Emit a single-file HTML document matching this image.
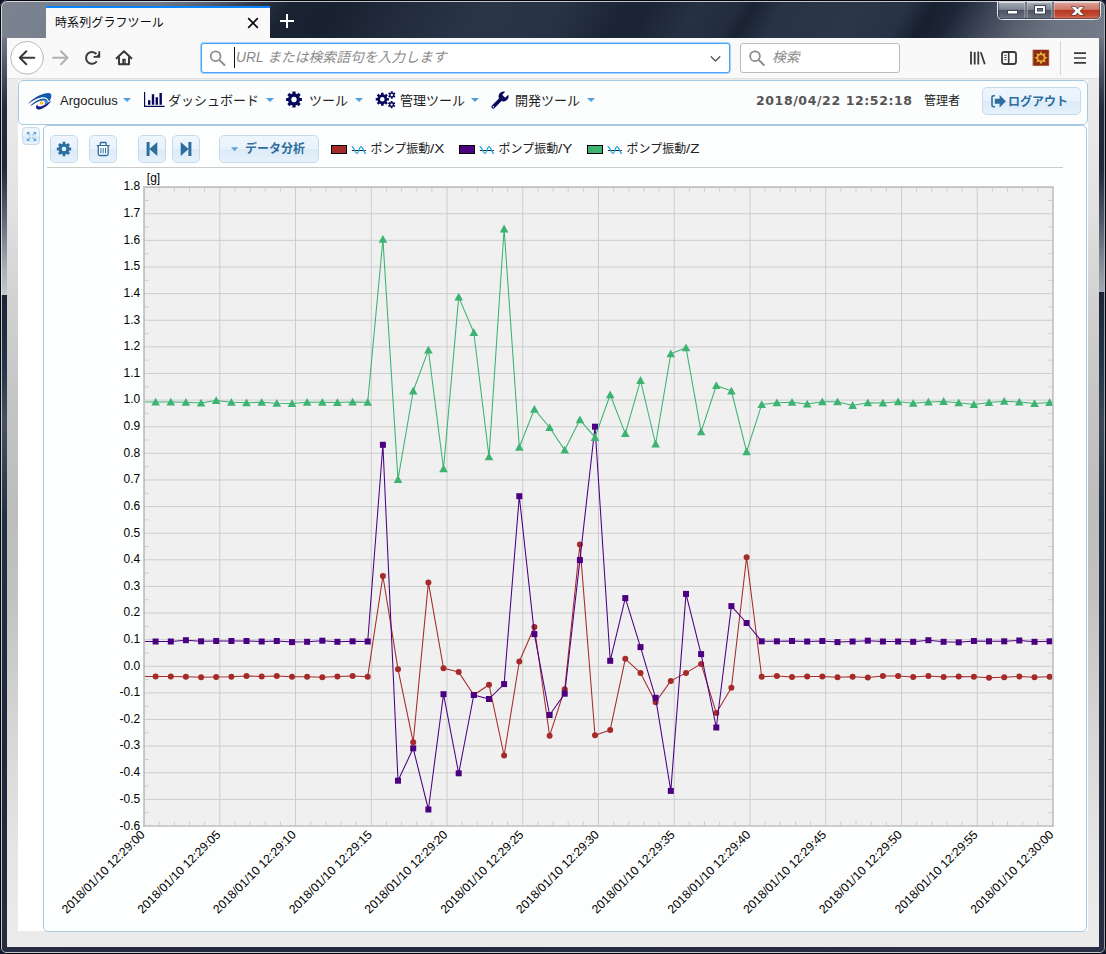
<!DOCTYPE html>
<html lang="ja">
<head>
<meta charset="utf-8">
<title>時系列グラフツール</title>
<style>
*{box-sizing:border-box;margin:0;padding:0}
html,body{width:1106px;height:954px;overflow:hidden;background:#0c1228}
body{font-family:"Liberation Sans","Noto Sans CJK JP",sans-serif;font-size:13px;color:#222;position:relative}
.abs{position:absolute}
#win{position:absolute;left:0;top:0;width:1106px;height:954px;border-radius:7px 7px 6px 6px;overflow:hidden;
 background:linear-gradient(100deg,#7b8390 0px,#6f7785 150px,#333c4e 230px,#18202f 300px,#1a2333 430px,#283245 520px,#1b2434 640px,#1a2232 760px,#2e384a 860px,#2a3446 930px,#4a5364 1000px,#6d7582 1060px,#717986 1106px);}
#titlebar{left:0;top:0;width:1106px;height:60px;border-radius:7px 7px 0 0;background:linear-gradient(120deg,#7a828f 10px,#79818e 44px,#707886 139px,#555e6e 183px,#343d4f 217px,#1a2331 252px,#18212f 295px,#222c3d 356px,#2a3547 425px,#273244 494px,#1c2535 542px,#1b2434 564px,#263143 607px,#222c3e 642px,#1a2332 655px,#283346 681px,#2b3648 746px,#273244 789px,#18202f 811px,#1d2636 832px,#3d4657 863px,#59616f 893px,#6c7481 927px,#727a87 967px)}
#frameL{left:1px;top:38px;width:6px;height:910px;background:linear-gradient(180deg,#707885 0,#4d5665 30px,#222c3d 70px,#1f293a 130px,#5d6573 180px,#a9aeb8 230px,#c4c8cf 257px,#1b2537 257.5px,#26354a 330px,#46535f 385px,#223044 480px,#1f2a3d 700px,#272b40 910px)}
#frameR{left:1099px;top:38px;width:6px;height:910px;background:linear-gradient(180deg,#6e7683 0,#4d5665 30px,#222c3d 70px,#1f293a 130px,#4d5665 180px,#8b919c 230px,#a3a8b2 254px,#1b2537 254.5px,#26354a 330px,#3c4857 385px,#223044 480px,#1f2a3d 700px,#292d43 910px)}
#frameB{left:1px;top:947px;width:1104px;height:6px;background:linear-gradient(90deg,#272b40 0,#242a3d 300px,#272c41 700px,#2b2f45 1104px)}
#frameOuter{left:0;top:0;width:1106px;height:954px;border:1px solid #05070c;border-radius:7px 7px 6px 6px}
#frameLine{left:1px;top:1px;width:1104px;height:952px;border:1px solid rgba(232,235,240,.8);border-right-color:rgba(190,195,204,.75);border-radius:6px 6px 5px 5px}
#tab{left:46px;top:6px;width:224px;height:32px;background:#f9f9fa;border-top:2px solid #0a84ff}
#tabtitle{left:55px;top:13.500px;font-size:12px;color:#0c0c0d;line-height:18px;letter-spacing:.1px}
#nav{left:7px;top:38px;width:1092px;height:41px;background:#f9f9fa;border-bottom:1px solid #e0e0e0}
#content{left:7px;top:79px;width:1092px;height:868px;background:linear-gradient(180deg,#ececec 0,#e3e3e3 120px,#d2d2d2 220px,#c4c4c4 330px,#bdbdbd 430px,#c2c2c2 520px,#d6d6d6 650px,#e6e6e6 780px,#ececec 868px)}
#white{left:18px;top:80px;width:1070px;height:851px;background:#fff}
.urlbar{background:#fff;border:1px solid #bcbcbc;border-radius:3px;height:30px;top:43px}
#url{left:201px;width:529px;border-color:#4aa3f5;box-shadow:0 0 0 1px rgba(10,132,255,.35)}
#search{left:740px;width:160px}
.ph{font-style:italic;color:#8a8a8a;font-size:13.8px;line-height:20px;white-space:nowrap}
.panel{border:1px solid #a6c9e2;border-radius:5px;background:#fcfdfd}
#menubar{left:18px;top:80px;width:1070px;height:45px}
#main{left:43px;top:125px;width:1044px;height:807px;background:#fdfefe}
.mi{top:91.700px;font-size:13px;line-height:18px;color:#222;white-space:nowrap}
.caret{width:0;height:0;border-left:4px solid transparent;border-right:4px solid transparent;border-top:4.300px solid #4f9fdc;top:98px}
.btn{border:1px solid #c5dbec;border-radius:5px;background:linear-gradient(180deg,#edf5fd 0,#eaf3fc 49%,#dcebf8 51%,#e6f1fb 100%);color:#2e6e9e}
.tb{top:135px;width:28px;height:28px}
.leg{top:141px;font-size:12px;line-height:16px;color:#222;white-space:nowrap}
.sw{top:145px;width:16px;height:9px;border:1px solid #000}
</style>
</head>
<body>
<div id="win">
<div class="abs" id="titlebar"></div>
<!-- window controls -->
<svg class="abs" style="left:997px;top:0" width="105" height="22" viewBox="0 0 105 22">
 <defs>
  <linearGradient id="gb" x1="0" y1="0" x2="0" y2="1"><stop offset="0" stop-color="#a9afb9"/><stop offset=".45" stop-color="#7d8591"/><stop offset=".5" stop-color="#4b5464"/><stop offset="1" stop-color="#69717f"/></linearGradient>
  <linearGradient id="gr" x1="0" y1="0" x2="0" y2="1"><stop offset="0" stop-color="#dca59b"/><stop offset=".45" stop-color="#cf7768"/><stop offset=".5" stop-color="#b7371f"/><stop offset=".8" stop-color="#c24a31"/><stop offset="1" stop-color="#d0705c"/></linearGradient>
 </defs>
 <path d="M.5 1V14.500q0 5 5 5H98.500q5 0 5-5V1z" fill="#20283a" stroke="#e9ecf0" stroke-width="1"/>
 <path d="M1.500 2V14.500q0 4 4 4H28.500V2z" fill="url(#gb)"/>
 <path d="M29.500 2V18.500H55.500V2z" fill="url(#gb)"/>
 <path d="M56.500 2V18.500H98.500q4 0 4-4V2z" fill="url(#gr)"/>
 <path d="M29 2V18.500M56 2V18.500" stroke="#2f3747" stroke-width="1"/><path d="M2 2.500H28V18M30 18V2.500H55V18M57 18V2.500H102" stroke="rgba(255,255,255,.55)" stroke-width="1" fill="none"/>
 <rect x="10.500" y="10.500" width="10" height="3.500" fill="#fff" stroke="#3c4454" stroke-width="1"/>
 <rect x="37.500" y="5.500" width="11" height="8.500" fill="#fff" stroke="#3c4454" stroke-width="1"/>
 <rect x="40.500" y="8.500" width="5" height="2.500" fill="#6a7280" stroke="#3c4454" stroke-width="1"/>
 <text transform="translate(80.500 14.500) scale(1.22 .92)" text-anchor="middle" font-family="'DejaVu Sans','Liberation Sans',sans-serif" font-weight="bold" font-size="16" fill="#fff" stroke="#4a3436" stroke-width="1.100" paint-order="stroke">x</text>
</svg>
<div class="abs" id="frameL"></div><div class="abs" id="frameR"></div><div class="abs" id="frameB"></div>
<div class="abs" id="tab"></div>
<div class="abs" id="tabtitle">時系列グラフツール</div>
<svg class="abs" style="left:245px;top:15px" width="16" height="16" viewBox="0 0 16 16"><path d="M3.200 3.200L12.800 12.800M12.800 3.200L3.200 12.800" stroke="#0c0c0d" stroke-width="1.700" fill="none"/></svg>
<svg class="abs" style="left:278px;top:12px" width="18" height="18" viewBox="0 0 18 18"><path d="M9 2V16M2 9H16" stroke="#fff" stroke-width="2" fill="none"/></svg>
<div class="abs" id="nav"></div>
<div class="abs urlbar" id="url"></div>
<div class="abs urlbar" id="search"></div>
<svg class="abs" style="left:7px;top:38px" width="1092" height="40" viewBox="7 38 1092 40" fill="none" stroke-linecap="round" stroke-linejoin="round">
<circle cx="27" cy="57.8" r="16.3" fill="#fff" stroke="#b9b9b9" stroke-width="1"/>
<path d="M34.3 57.8H20.3M26.3 51.3L19.800 57.8L26.300 64.3" stroke="#3a3a3c" stroke-width="2"/>
<path d="M53 57.8H67M61 51.3L67.500 57.8L61 64.3" stroke="#b1b1b3" stroke-width="2"/>
<path d="M96.400 54A5.900 5.900 0 1 0 96.800 61.200" stroke="#3a3a3c" stroke-width="2" stroke-linecap="butt"/>
<path d="M99.300 51.300V56.800H93.600" stroke="#3a3a3c" stroke-width="1.800" stroke-linecap="butt" stroke-linejoin="miter"/><path d="M99 53.500V56.500H96Z" fill="#3a3a3c" stroke="none"/>
<path d="M116.600 58.300L124 51.200L131.400 58.300M119 57.500V64.200H129V57.500" stroke="#3a3a3c" stroke-width="2"/>
<path d="M122.300 64.500V58.800H125.700V64.500Z" fill="#3a3a3c" stroke="none"/><circle cx="124.500" cy="61.800" r=".55" fill="#e8e8e8" stroke="none"/>
<circle cx="215.600" cy="56.2" r="4.900" stroke="#8d8d8f" stroke-width="1.800"/><path d="M219.300 59.9L224.400 65" stroke="#8d8d8f" stroke-width="2"/>
<path d="M711.200 56.800L715.500 61.100L719.800 56.800" stroke="#555557" stroke-width="1.350"/>
<circle cx="755" cy="56.2" r="4.900" stroke="#8d8d8f" stroke-width="1.800"/><path d="M758.700 59.9L763.800 65" stroke="#8d8d8f" stroke-width="2"/>
<path d="M971 51.5V64.500M974.700 52V64.500M978.300 51.5V64.500M980.800 52.3L984.800 64.3" stroke="#3a3a3c" stroke-width="1.800" stroke-linecap="butt"/>
<rect x="1002" y="52" width="14" height="12" rx="2.200" stroke="#3a3a3c" stroke-width="1.800"/><path d="M1008.700 52V64" stroke="#3a3a3c" stroke-width="1.600"/><path d="M1004.300 55.3H1006.500M1004.300 57.5H1006.500M1004.300 59.7H1006.500" stroke="#3a3a3c" stroke-width="1" stroke-linecap="butt"/>
<rect x="1033.200" y="50" width="15.600" height="15.600" fill="#8a2a10" stroke="#a8452c" stroke-width=".6"/>
<path d="M1041.00 51.20L1042.57 54.01L1045.67 53.13L1044.79 56.23L1047.60 57.80L1044.79 59.37L1045.67 62.47L1042.57 61.59L1041.00 64.40L1039.43 61.59L1036.33 62.47L1037.21 59.37L1034.40 57.80L1037.21 56.23L1036.33 53.13L1039.43 54.01Z" fill="#e6b03a" stroke="none"/>
<circle cx="1041" cy="57.8" r="2.700" fill="#9a3512" stroke="none"/>
<path d="M1060.500 41V75" stroke="#d4d4d4" stroke-width="1" stroke-linecap="butt"/>
<path d="M1074 53.2H1086M1074 58H1086M1074 62.800H1086" stroke="#3a3a3c" stroke-width="1.700" stroke-linecap="butt"/>
</svg>
<div class="abs ph" style="left:236px;top:47.600px">URL または検索語句を入力します</div>
<div class="abs" style="left:234px;top:47px;width:1px;height:21px;background:#111"></div>
<div class="abs ph" style="left:772px;top:47.600px">検索</div>
<div class="abs" id="content"></div>
<div class="abs" id="white"></div>
<div class="abs panel" id="menubar"></div>
<div class="abs panel" id="main"></div>
<div class="abs btn" style="left:982px;top:87px;width:99px;height:28px"></div>
<svg class="abs" style="left:18px;top:80px" width="1070" height="45" viewBox="18 80 1070 45">
<defs><linearGradient id="lg1" x1="0" y1="1" x2="1" y2="0"><stop offset="0" stop-color="#1c1c84"/><stop offset=".5" stop-color="#164fa8"/><stop offset="1" stop-color="#0f63b4"/></linearGradient><radialGradient id="lg2"><stop offset="0" stop-color="#ffe000"/><stop offset="1" stop-color="#ff9a10"/></radialGradient></defs>
<g transform="translate(28 93)"><path d="M0 11.200C5 5 13.500 .2 20.500 .1C24.300 .3 24.300 4.200 21 8.600C20.300 5.300 17.500 3.900 14 4.300C9 5 4 8 0 11.200Z" fill="url(#lg1)"/><path d="M2 13.300C6 8.300 12 5.500 16 5.500C18.200 5.600 19.400 6.800 19.800 8.600C17.500 7.200 14 7 11 8.200C8 9.400 5 11.300 2 13.300Z" fill="url(#lg1)"/><path d="M15.800 7.800C18 7.600 19.800 8.300 21 9.400C19.500 11 17.800 12.200 15.800 13C17.200 11.300 17.200 9.300 15.800 7.800Z" fill="#2f74c4" opacity=".85"/><path d="M9.200 11.300C7 14.500 8.400 17.100 11.600 16.500C16.100 15.600 20.900 11.600 23.400 7.200C20 10.600 15.300 12.900 12.300 13.400C10.300 13.700 9.200 13 9.200 11.300Z" fill="#17178a"/><circle cx="13.600" cy="10" r="1.700" fill="url(#lg2)"/></g>
<path d="M144.600 92V106.400H164.600" stroke="#06065c" stroke-width="1.200" fill="none"/><path d="M148 100.200h2.400v4.600h-2.400zM151.800 94.200h2.400v10.600h-2.400zM155.600 97.200h2.400v7.600h-2.400zM159.500 93h2.400v11.800h-2.400z" fill="#06065c"/>
<path d="M292.44 93.60L292.42 91.56L295.58 91.56L295.56 93.60L297.06 94.23L298.50 92.77L300.73 95.00L299.27 96.44L299.90 97.94L301.94 97.92L301.94 101.08L299.90 101.06L299.27 102.56L300.73 104.00L298.50 106.23L297.06 104.77L295.56 105.40L295.58 107.44L292.42 107.44L292.44 105.40L290.94 104.77L289.50 106.23L287.27 104.00L288.73 102.56L288.10 101.06L286.06 101.08L286.06 97.92L288.10 97.94L288.73 96.44L287.27 95.00L289.50 92.77L290.94 94.23ZM296.70 99.50A2.7 2.7 0 1 0 291.30 99.50A2.7 2.7 0 1 0 296.70 99.50Z" fill="#06065c" fill-rule="evenodd"/>
<path d="M381.02 94.47L380.99 92.73L383.61 92.73L383.58 94.47L384.81 94.98L386.02 93.73L387.87 95.58L386.62 96.79L387.13 98.02L388.87 97.99L388.87 100.61L387.13 100.58L386.62 101.81L387.87 103.02L386.02 104.87L384.81 103.62L383.58 104.13L383.61 105.87L380.99 105.87L381.02 104.13L379.79 103.62L378.58 104.87L376.73 103.02L377.98 101.81L377.47 100.58L375.73 100.61L375.73 97.99L377.47 98.02L377.98 96.79L376.73 95.58L378.58 93.73L379.79 94.98ZM384.60 99.30A2.3 2.3 0 1 0 380.00 99.30A2.3 2.3 0 1 0 384.60 99.30Z" fill="#06065c" fill-rule="evenodd"/>
<path d="M390.92 92.55L390.82 91.33L392.78 91.33L392.68 92.55L393.48 93.01L394.49 92.31L395.47 94.02L394.36 94.54L394.36 95.46L395.47 95.98L394.49 97.69L393.48 96.99L392.68 97.45L392.78 98.67L390.82 98.67L390.92 97.45L390.12 96.99L389.11 97.69L388.13 95.98L389.24 95.46L389.24 94.54L388.13 94.02L389.11 92.31L390.12 93.01ZM393.00 95.00A1.2 1.2 0 1 0 390.60 95.00A1.2 1.2 0 1 0 393.00 95.00Z" fill="#06065c" fill-rule="evenodd"/>
<path d="M390.72 102.15L390.62 100.93L392.58 100.93L392.48 102.15L393.28 102.61L394.29 101.91L395.27 103.62L394.16 104.14L394.16 105.06L395.27 105.58L394.29 107.29L393.28 106.59L392.48 107.05L392.58 108.27L390.62 108.27L390.72 107.05L389.92 106.59L388.91 107.29L387.93 105.58L389.04 105.06L389.04 104.14L387.93 103.62L388.91 101.91L389.92 102.61ZM392.80 104.60A1.2 1.2 0 1 0 390.40 104.60A1.2 1.2 0 1 0 392.80 104.60Z" fill="#06065c" fill-rule="evenodd"/>
<g transform="translate(500.200 99.800) rotate(45)"><path d="M-1.900 -1.500V9.800Q-1.900 11.700 0 11.700Q1.900 11.700 1.900 9.800V-1.500Z" fill="#06065c"/><path d="M-2.100 -9.300A5 5 0 1 0 2.100 -9.300V-4.900H-2.100Z" fill="#06065c"/><circle cx="0" cy="9.600" r=".8" fill="#cfe0ff"/></g>
<path d="M995 95.700H993.600Q992 95.700 992 97.300V105.200Q992 106.800 993.600 106.800H995" stroke="#2e6e9e" stroke-width="1.600" fill="none"/><path d="M994.800 98.700H999.600V95L1005.900 101.200L999.600 107.400V103.700H994.800Z" fill="#2e6e9e"/>
</svg>
<div class="abs mi" style="left:60px">Argoculus</div><div class="abs caret" style="left:123px"></div>
<div class="abs mi" style="left:168px">ダッシュボード</div><div class="abs caret" style="left:265.5px"></div>
<div class="abs mi" style="left:309px">ツール</div><div class="abs caret" style="left:355px"></div>
<div class="abs mi" style="left:400px">管理ツール</div><div class="abs caret" style="left:471px"></div>
<div class="abs mi" style="left:515px">開発ツール</div><div class="abs caret" style="left:587px"></div>
<div class="abs" id="clock" style="left:756px;top:92px;letter-spacing:.6px;font:bold 12.5px/18px 'DejaVu Sans','Liberation Sans',sans-serif;color:#555;white-space:nowrap">2018/04/22 12:52:18</div>
<div class="abs" id="user" style="left:924px;top:92px;font-size:12px;line-height:18px;color:#222;white-space:nowrap">管理者</div>
<div class="abs" id="logout" style="left:1008px;top:92.600px;font-size:12px;font-weight:bold;line-height:18px;color:#2e6e9e;white-space:nowrap">ログアウト</div>
<div class="abs btn" style="left:22px;top:127px;width:18px;height:18px;border-radius:4px"></div>
<svg class="abs" style="left:22px;top:127px" width="18" height="18" viewBox="0 0 18 18"><path d="M4.900 4.900h3.100l-3.100 3.100zM14.100 4.900v3.100l-3.100-3.100zM4.900 14.100v-3.100l3.100 3.100zM14.100 14.100h-3.100l3.100-3.100z" fill="#4f9fd5"/><path d="M6.300 6.300L8.700 8.700M12.700 6.300L10.300 8.700M6.300 12.700L8.700 10.300M12.700 12.700L10.300 10.300" stroke="#4f9fd5" stroke-width="1.100" stroke-dasharray="1.100 .6" fill="none"/></svg>
<div class="abs btn tb" style="left:50px"></div>
<div class="abs btn tb" style="left:89px"></div>
<div class="abs btn tb" style="left:138px"></div>
<div class="abs btn tb" style="left:172px"></div>
<div class="abs btn" style="left:219px;top:135px;width:100px;height:28px"></div>
<svg class="abs" style="left:43px;top:125px" width="300" height="45" viewBox="43 125 300 45">
<path d="M62.59 143.68L62.58 141.84L65.42 141.84L65.41 143.68L66.76 144.24L68.06 142.93L70.07 144.94L68.76 146.24L69.32 147.59L71.16 147.58L71.16 150.42L69.32 150.41L68.76 151.76L70.07 153.06L68.06 155.07L66.76 153.76L65.41 154.32L65.42 156.16L62.58 156.16L62.59 154.32L61.24 153.76L59.94 155.07L57.93 153.06L59.24 151.76L58.68 150.41L56.84 150.42L56.84 147.58L58.68 147.59L59.24 146.24L57.93 144.94L59.94 142.93L61.24 144.24ZM66.30 149.00A2.3 2.3 0 1 0 61.70 149.00A2.3 2.3 0 1 0 66.30 149.00Z" fill="#2e6e9e" fill-rule="evenodd"/>
<g fill="none" stroke="#2e6e9e"><path d="M96.800 145.600H109.600" stroke-width="1.300"/><path d="M100.300 145V143.300Q100.300 142.500 101.200 142.500H105.200Q106.100 142.500 106.100 143.300V145" stroke-width="1.300"/><path d="M98.300 146V154Q98.300 155.500 99.800 155.500H106.600Q108.100 155.500 108.100 154V146" stroke-width="1.300" fill="#fdfeff"/><path d="M100.900 148V153.300M103.200 148V153.300M105.500 148V153.300" stroke-width="1"/></g>
<path d="M146.600 142h3v14h-3zM157.300 142V156L149.400 149Z" fill="#2e6e9e"/>
<path d="M191.400 142h-3v14h3zM180.700 142V156L188.600 149Z" fill="#2e6e9e"/>
<path d="M231 147.200H238.200L234.600 151.300Z" fill="#5fa3d6"/>
</svg>
<div class="abs" id="da" style="left:245px;top:140px;font-size:12px;font-weight:bold;line-height:18px;color:#2e6e9e;white-space:nowrap">データ分析</div>
<div class="abs sw" style="left:331px;background:#a52a2a"></div>
<svg class="abs" style="left:351px;top:144px" width="17" height="12" viewBox="0 0 17 12" fill="none"><path d="M.9 6.500H14.900" stroke="#222" stroke-width="1"/><path d="M1.100 2.700C3.600 3.600 3.700 9.400 5.900 9.400S7.900 2.500 10 2.500S12.300 8.300 14.600 9.500" stroke="#1ca8ee" stroke-width="1.250" stroke-linecap="round"/></svg>
<div class="abs leg" id="leg0" style="left:370.5px">ポンプ振動<span style="display:inline-block;transform:scaleX(1.27);transform-origin:0 50%">/X</span></div>
<div class="abs sw" style="left:459px;background:#4b0082"></div>
<svg class="abs" style="left:479px;top:144px" width="17" height="12" viewBox="0 0 17 12" fill="none"><path d="M.9 6.500H14.900" stroke="#222" stroke-width="1"/><path d="M1.100 2.700C3.600 3.600 3.700 9.400 5.900 9.400S7.900 2.500 10 2.500S12.300 8.300 14.600 9.500" stroke="#1ca8ee" stroke-width="1.250" stroke-linecap="round"/></svg>
<div class="abs leg" id="leg1" style="left:498.5px">ポンプ振動<span style="display:inline-block;transform:scaleX(1.27);transform-origin:0 50%">/Y</span></div>
<div class="abs sw" style="left:587px;background:#3cb371"></div>
<svg class="abs" style="left:607px;top:144px" width="17" height="12" viewBox="0 0 17 12" fill="none"><path d="M.9 6.500H14.900" stroke="#222" stroke-width="1"/><path d="M1.100 2.700C3.600 3.600 3.700 9.400 5.900 9.400S7.900 2.500 10 2.500S12.300 8.300 14.600 9.500" stroke="#1ca8ee" stroke-width="1.250" stroke-linecap="round"/></svg>
<div class="abs leg" id="leg2" style="left:626.5px">ポンプ振動<span style="display:inline-block;transform:scaleX(1.27);transform-origin:0 50%">/Z</span></div>
<div class="abs" style="left:47px;top:167px;width:1016px;height:1px;background:#cbcbcb"></div>
<svg class="abs" style="left:0;top:0" width="1106" height="954" viewBox="0 0 1106 954">
<rect x="144.05" y="187.15" width="908.9" height="638.9" fill="#f0f0f0"/>
<path d="M144.05 799.38H1052.95M144.05 772.76H1052.95M144.05 746.14H1052.95M144.05 719.52H1052.95M144.05 692.91H1052.95M144.05 666.29H1052.95M144.05 639.67H1052.95M144.05 613.05H1052.95M144.05 586.43H1052.95M144.05 559.81H1052.95M144.05 533.19H1052.95M144.05 506.57H1052.95M144.05 479.96H1052.95M144.05 453.34H1052.95M144.05 426.72H1052.95M144.05 400.10H1052.95M144.05 373.48H1052.95M144.05 346.86H1052.95M144.05 320.24H1052.95M144.05 293.63H1052.95M144.05 267.01H1052.95M144.05 240.39H1052.95M144.05 213.77H1052.95M219.79 187.15V826.0M295.53 187.15V826.0M371.28 187.15V826.0M447.02 187.15V826.0M522.76 187.15V826.0M598.50 187.15V826.0M674.24 187.15V826.0M749.98 187.15V826.0M825.73 187.15V826.0M901.47 187.15V826.0M977.21 187.15V826.0" stroke="#cdcdcd" stroke-width="1" fill="none"/>
<path d="M159.20 187.15v4.6M159.20 826.0v-4.6M174.35 187.15v4.6M174.35 826.0v-4.6M189.50 187.15v4.6M189.50 826.0v-4.6M204.64 187.15v4.6M204.64 826.0v-4.6M234.94 187.15v4.6M234.94 826.0v-4.6M250.09 187.15v4.6M250.09 826.0v-4.6M265.24 187.15v4.6M265.24 826.0v-4.6M280.38 187.15v4.6M280.38 826.0v-4.6M310.68 187.15v4.6M310.68 826.0v-4.6M325.83 187.15v4.6M325.83 826.0v-4.6M340.98 187.15v4.6M340.98 826.0v-4.6M356.13 187.15v4.6M356.13 826.0v-4.6M386.42 187.15v4.6M386.42 826.0v-4.6M401.57 187.15v4.6M401.57 826.0v-4.6M416.72 187.15v4.6M416.72 826.0v-4.6M431.87 187.15v4.6M431.87 826.0v-4.6M462.17 187.15v4.6M462.17 826.0v-4.6M477.31 187.15v4.6M477.31 826.0v-4.6M492.46 187.15v4.6M492.46 826.0v-4.6M507.61 187.15v4.6M507.61 826.0v-4.6M537.91 187.15v4.6M537.91 826.0v-4.6M553.06 187.15v4.6M553.06 826.0v-4.6M568.20 187.15v4.6M568.20 826.0v-4.6M583.35 187.15v4.6M583.35 826.0v-4.6M613.65 187.15v4.6M613.65 826.0v-4.6M628.80 187.15v4.6M628.80 826.0v-4.6M643.95 187.15v4.6M643.95 826.0v-4.6M659.09 187.15v4.6M659.09 826.0v-4.6M689.39 187.15v4.6M689.39 826.0v-4.6M704.54 187.15v4.6M704.54 826.0v-4.6M719.69 187.15v4.6M719.69 826.0v-4.6M734.84 187.15v4.6M734.84 826.0v-4.6M765.13 187.15v4.6M765.13 826.0v-4.6M780.28 187.15v4.6M780.28 826.0v-4.6M795.43 187.15v4.6M795.43 826.0v-4.6M810.58 187.15v4.6M810.58 826.0v-4.6M840.87 187.15v4.6M840.87 826.0v-4.6M856.02 187.15v4.6M856.02 826.0v-4.6M871.17 187.15v4.6M871.17 826.0v-4.6M886.32 187.15v4.6M886.32 826.0v-4.6M916.62 187.15v4.6M916.62 826.0v-4.6M931.76 187.15v4.6M931.76 826.0v-4.6M946.91 187.15v4.6M946.91 826.0v-4.6M962.06 187.15v4.6M962.06 826.0v-4.6M992.36 187.15v4.6M992.36 826.0v-4.6M1007.51 187.15v4.6M1007.51 826.0v-4.6M1022.65 187.15v4.6M1022.65 826.0v-4.6M1037.80 187.15v4.6M1037.80 826.0v-4.6M144.05 812.69h4.6M1052.95 812.69h-4.6M144.05 786.07h4.6M1052.95 786.07h-4.6M144.05 759.45h4.6M1052.95 759.45h-4.6M144.05 732.83h4.6M1052.95 732.83h-4.6M144.05 706.22h4.6M1052.95 706.22h-4.6M144.05 679.60h4.6M1052.95 679.60h-4.6M144.05 652.98h4.6M1052.95 652.98h-4.6M144.05 626.36h4.6M1052.95 626.36h-4.6M144.05 599.74h4.6M1052.95 599.74h-4.6M144.05 573.12h4.6M1052.95 573.12h-4.6M144.05 546.50h4.6M1052.95 546.50h-4.6M144.05 519.88h4.6M1052.95 519.88h-4.6M144.05 493.27h4.6M1052.95 493.27h-4.6M144.05 466.65h4.6M1052.95 466.65h-4.6M144.05 440.03h4.6M1052.95 440.03h-4.6M144.05 413.41h4.6M1052.95 413.41h-4.6M144.05 386.79h4.6M1052.95 386.79h-4.6M144.05 360.17h4.6M1052.95 360.17h-4.6M144.05 333.55h4.6M1052.95 333.55h-4.6M144.05 306.93h4.6M1052.95 306.93h-4.6M144.05 280.32h4.6M1052.95 280.32h-4.6M144.05 253.70h4.6M1052.95 253.70h-4.6M144.05 227.08h4.6M1052.95 227.08h-4.6M144.05 200.46h4.6M1052.95 200.46h-4.6" stroke="#cecece" stroke-width="1" fill="none"/>
<clipPath id="cp"><rect x="144.05" y="187.15" width="908.9" height="638.9"/></clipPath>
<g clip-path="url(#cp)">
<path d="M144.1 676.4L155.6 676.4L170.8 676.4L185.9 676.7L201.1 677.2L216.2 676.9L231.4 676.7L246.5 676.1L261.7 676.4L276.8 676.1L292.0 676.7L307.1 676.7L322.3 677.2L337.4 676.4L352.6 675.9L367.7 676.7L382.9 576.0L398.0 669.2L413.2 742.2L428.4 582.4L443.5 668.2L458.7 672.1L473.8 695.0L489.0 684.7L504.1 755.5L519.3 661.5L534.4 627.0L549.6 735.8L564.7 689.2L579.9 544.6L595.0 735.2L610.2 729.9L625.3 658.8L640.5 672.9L655.6 702.2L670.8 680.9L686.0 672.9L701.1 663.9L716.3 712.9L731.4 687.8L746.6 557.2L761.7 676.7L776.9 675.9L792.0 676.9L807.2 676.4L822.3 676.4L837.5 677.2L852.6 676.7L867.8 677.5L882.9 675.9L898.1 676.1L913.2 676.9L928.4 676.1L943.6 676.9L958.7 676.4L973.9 676.7L989.0 677.7L1004.2 677.2L1019.3 676.4L1034.5 677.2L1049.6 676.7L1055.0 676.7" stroke="#a52a2a" stroke-width="1.05" fill="none" stroke-linejoin="round"/>
<g fill="#a52a2a"><circle cx="155.6" cy="676.4" r="3"/><circle cx="170.8" cy="676.4" r="3"/><circle cx="185.9" cy="676.7" r="3"/><circle cx="201.1" cy="677.2" r="3"/><circle cx="216.2" cy="676.9" r="3"/><circle cx="231.4" cy="676.7" r="3"/><circle cx="246.5" cy="676.1" r="3"/><circle cx="261.7" cy="676.4" r="3"/><circle cx="276.8" cy="676.1" r="3"/><circle cx="292.0" cy="676.7" r="3"/><circle cx="307.1" cy="676.7" r="3"/><circle cx="322.3" cy="677.2" r="3"/><circle cx="337.4" cy="676.4" r="3"/><circle cx="352.6" cy="675.9" r="3"/><circle cx="367.7" cy="676.7" r="3"/><circle cx="382.9" cy="576.0" r="3"/><circle cx="398.0" cy="669.2" r="3"/><circle cx="413.2" cy="742.2" r="3"/><circle cx="428.4" cy="582.4" r="3"/><circle cx="443.5" cy="668.2" r="3"/><circle cx="458.7" cy="672.1" r="3"/><circle cx="473.8" cy="695.0" r="3"/><circle cx="489.0" cy="684.7" r="3"/><circle cx="504.1" cy="755.5" r="3"/><circle cx="519.3" cy="661.5" r="3"/><circle cx="534.4" cy="627.0" r="3"/><circle cx="549.6" cy="735.8" r="3"/><circle cx="564.7" cy="689.2" r="3"/><circle cx="579.9" cy="544.6" r="3"/><circle cx="595.0" cy="735.2" r="3"/><circle cx="610.2" cy="729.9" r="3"/><circle cx="625.3" cy="658.8" r="3"/><circle cx="640.5" cy="672.9" r="3"/><circle cx="655.6" cy="702.2" r="3"/><circle cx="670.8" cy="680.9" r="3"/><circle cx="686.0" cy="672.9" r="3"/><circle cx="701.1" cy="663.9" r="3"/><circle cx="716.3" cy="712.9" r="3"/><circle cx="731.4" cy="687.8" r="3"/><circle cx="746.6" cy="557.2" r="3"/><circle cx="761.7" cy="676.7" r="3"/><circle cx="776.9" cy="675.9" r="3"/><circle cx="792.0" cy="676.9" r="3"/><circle cx="807.2" cy="676.4" r="3"/><circle cx="822.3" cy="676.4" r="3"/><circle cx="837.5" cy="677.2" r="3"/><circle cx="852.6" cy="676.7" r="3"/><circle cx="867.8" cy="677.5" r="3"/><circle cx="882.9" cy="675.9" r="3"/><circle cx="898.1" cy="676.1" r="3"/><circle cx="913.2" cy="676.9" r="3"/><circle cx="928.4" cy="676.1" r="3"/><circle cx="943.6" cy="676.9" r="3"/><circle cx="958.7" cy="676.4" r="3"/><circle cx="973.9" cy="676.7" r="3"/><circle cx="989.0" cy="677.7" r="3"/><circle cx="1004.2" cy="677.2" r="3"/><circle cx="1019.3" cy="676.4" r="3"/><circle cx="1034.5" cy="677.2" r="3"/><circle cx="1049.6" cy="676.7" r="3"/></g>
<path d="M144.1 641.5L155.6 641.5L170.8 641.5L185.9 640.2L201.1 641.3L216.2 641.0L231.4 641.0L246.5 641.0L261.7 641.5L276.8 641.0L292.0 642.1L307.1 641.8L322.3 640.7L337.4 641.8L352.6 641.3L367.7 641.5L382.9 444.8L398.0 780.7L413.2 748.3L428.4 809.5L443.5 694.2L458.7 773.3L473.8 695.0L489.0 699.0L504.1 684.1L519.3 496.2L534.4 634.1L549.6 715.0L564.7 693.7L579.9 560.1L595.0 426.7L610.2 660.8L625.3 598.1L640.5 647.1L655.6 697.8L670.8 790.9L686.0 593.9L701.1 654.1L716.3 727.5L731.4 606.1L746.6 623.0L761.7 641.3L776.9 641.3L792.0 641.0L807.2 641.5L822.3 641.0L837.5 642.1L852.6 641.5L867.8 640.7L882.9 641.5L898.1 641.5L913.2 641.8L928.4 640.2L943.6 641.8L958.7 642.3L973.9 641.0L989.0 641.3L1004.2 641.3L1019.3 640.5L1034.5 641.8L1049.6 641.3L1055.0 641.3" stroke="#4b0082" stroke-width="1.05" fill="none" stroke-linejoin="round"/>
<g fill="#4b0082"><rect x="152.6" y="638.5" width="6" height="6"/><rect x="167.8" y="638.5" width="6" height="6"/><rect x="182.9" y="637.2" width="6" height="6"/><rect x="198.1" y="638.3" width="6" height="6"/><rect x="213.2" y="638.0" width="6" height="6"/><rect x="228.4" y="638.0" width="6" height="6"/><rect x="243.5" y="638.0" width="6" height="6"/><rect x="258.7" y="638.5" width="6" height="6"/><rect x="273.8" y="638.0" width="6" height="6"/><rect x="289.0" y="639.1" width="6" height="6"/><rect x="304.1" y="638.8" width="6" height="6"/><rect x="319.3" y="637.7" width="6" height="6"/><rect x="334.4" y="638.8" width="6" height="6"/><rect x="349.6" y="638.3" width="6" height="6"/><rect x="364.7" y="638.5" width="6" height="6"/><rect x="379.9" y="441.8" width="6" height="6"/><rect x="395.0" y="777.7" width="6" height="6"/><rect x="410.2" y="745.3" width="6" height="6"/><rect x="425.4" y="806.5" width="6" height="6"/><rect x="440.5" y="691.2" width="6" height="6"/><rect x="455.7" y="770.3" width="6" height="6"/><rect x="470.8" y="692.0" width="6" height="6"/><rect x="486.0" y="696.0" width="6" height="6"/><rect x="501.1" y="681.1" width="6" height="6"/><rect x="516.3" y="493.2" width="6" height="6"/><rect x="531.4" y="631.1" width="6" height="6"/><rect x="546.6" y="712.0" width="6" height="6"/><rect x="561.7" y="690.7" width="6" height="6"/><rect x="576.9" y="557.1" width="6" height="6"/><rect x="592.0" y="423.7" width="6" height="6"/><rect x="607.2" y="657.8" width="6" height="6"/><rect x="622.3" y="595.1" width="6" height="6"/><rect x="637.5" y="644.1" width="6" height="6"/><rect x="652.6" y="694.8" width="6" height="6"/><rect x="667.8" y="787.9" width="6" height="6"/><rect x="683.0" y="590.9" width="6" height="6"/><rect x="698.1" y="651.1" width="6" height="6"/><rect x="713.3" y="724.5" width="6" height="6"/><rect x="728.4" y="603.1" width="6" height="6"/><rect x="743.6" y="620.0" width="6" height="6"/><rect x="758.7" y="638.3" width="6" height="6"/><rect x="773.9" y="638.3" width="6" height="6"/><rect x="789.0" y="638.0" width="6" height="6"/><rect x="804.2" y="638.5" width="6" height="6"/><rect x="819.3" y="638.0" width="6" height="6"/><rect x="834.5" y="639.1" width="6" height="6"/><rect x="849.6" y="638.5" width="6" height="6"/><rect x="864.8" y="637.7" width="6" height="6"/><rect x="879.9" y="638.5" width="6" height="6"/><rect x="895.1" y="638.5" width="6" height="6"/><rect x="910.2" y="638.8" width="6" height="6"/><rect x="925.4" y="637.2" width="6" height="6"/><rect x="940.6" y="638.8" width="6" height="6"/><rect x="955.7" y="639.3" width="6" height="6"/><rect x="970.9" y="638.0" width="6" height="6"/><rect x="986.0" y="638.3" width="6" height="6"/><rect x="1001.2" y="638.3" width="6" height="6"/><rect x="1016.3" y="637.5" width="6" height="6"/><rect x="1031.5" y="638.8" width="6" height="6"/><rect x="1046.6" y="638.3" width="6" height="6"/></g>
<path d="M144.1 402.0L155.6 402.0L170.8 402.0L185.9 402.2L201.1 403.0L216.2 400.6L231.4 402.2L246.5 402.8L261.7 402.2L276.8 403.3L292.0 403.6L307.1 402.2L322.3 402.2L337.4 402.5L352.6 402.0L367.7 402.2L382.9 239.3L398.0 479.4L413.2 391.0L428.4 350.1L443.5 468.8L458.7 297.1L473.8 332.5L489.0 456.8L504.1 228.9L519.3 447.2L534.4 409.2L549.6 427.5L564.7 450.1L579.9 419.8L595.0 437.4L610.2 394.8L625.3 433.6L640.5 380.4L655.6 444.0L670.8 353.7L686.0 347.7L701.1 431.8L716.3 385.5L731.4 391.0L746.6 451.7L761.7 404.6L776.9 402.8L792.0 402.2L807.2 404.1L822.3 401.7L837.5 401.7L852.6 405.4L867.8 402.8L882.9 403.0L898.1 401.7L913.2 403.3L928.4 402.0L943.6 401.4L958.7 402.8L973.9 404.6L989.0 402.5L1004.2 401.2L1019.3 402.0L1034.5 403.6L1049.6 402.5L1055.0 402.5" stroke="#3cb371" stroke-width="1.05" fill="none" stroke-linejoin="round"/>
<g fill="#3cb371"><path d="M155.6 397.7l4.3 7.8h-8.6z"/><path d="M170.8 397.7l4.3 7.8h-8.6z"/><path d="M185.9 397.9l4.3 7.8h-8.6z"/><path d="M201.1 398.7l4.3 7.8h-8.6z"/><path d="M216.2 396.3l4.3 7.8h-8.6z"/><path d="M231.4 397.9l4.3 7.8h-8.6z"/><path d="M246.5 398.5l4.3 7.8h-8.6z"/><path d="M261.7 397.9l4.3 7.8h-8.6z"/><path d="M276.8 399.0l4.3 7.8h-8.6z"/><path d="M292.0 399.3l4.3 7.8h-8.6z"/><path d="M307.1 397.9l4.3 7.8h-8.6z"/><path d="M322.3 397.9l4.3 7.8h-8.6z"/><path d="M337.4 398.2l4.3 7.8h-8.6z"/><path d="M352.6 397.7l4.3 7.8h-8.6z"/><path d="M367.7 397.9l4.3 7.8h-8.6z"/><path d="M382.9 235.0l4.3 7.8h-8.6z"/><path d="M398.0 475.1l4.3 7.8h-8.6z"/><path d="M413.2 386.7l4.3 7.8h-8.6z"/><path d="M428.4 345.8l4.3 7.8h-8.6z"/><path d="M443.5 464.5l4.3 7.8h-8.6z"/><path d="M458.7 292.8l4.3 7.8h-8.6z"/><path d="M473.8 328.2l4.3 7.8h-8.6z"/><path d="M489.0 452.5l4.3 7.8h-8.6z"/><path d="M504.1 224.6l4.3 7.8h-8.6z"/><path d="M519.3 442.9l4.3 7.8h-8.6z"/><path d="M534.4 404.9l4.3 7.8h-8.6z"/><path d="M549.6 423.2l4.3 7.8h-8.6z"/><path d="M564.7 445.8l4.3 7.8h-8.6z"/><path d="M579.9 415.5l4.3 7.8h-8.6z"/><path d="M595.0 433.1l4.3 7.8h-8.6z"/><path d="M610.2 390.5l4.3 7.8h-8.6z"/><path d="M625.3 429.3l4.3 7.8h-8.6z"/><path d="M640.5 376.1l4.3 7.8h-8.6z"/><path d="M655.6 439.7l4.3 7.8h-8.6z"/><path d="M670.8 349.4l4.3 7.8h-8.6z"/><path d="M686.0 343.4l4.3 7.8h-8.6z"/><path d="M701.1 427.5l4.3 7.8h-8.6z"/><path d="M716.3 381.2l4.3 7.8h-8.6z"/><path d="M731.4 386.7l4.3 7.8h-8.6z"/><path d="M746.6 447.4l4.3 7.8h-8.6z"/><path d="M761.7 400.3l4.3 7.8h-8.6z"/><path d="M776.9 398.5l4.3 7.8h-8.6z"/><path d="M792.0 397.9l4.3 7.8h-8.6z"/><path d="M807.2 399.8l4.3 7.8h-8.6z"/><path d="M822.3 397.4l4.3 7.8h-8.6z"/><path d="M837.5 397.4l4.3 7.8h-8.6z"/><path d="M852.6 401.1l4.3 7.8h-8.6z"/><path d="M867.8 398.5l4.3 7.8h-8.6z"/><path d="M882.9 398.7l4.3 7.8h-8.6z"/><path d="M898.1 397.4l4.3 7.8h-8.6z"/><path d="M913.2 399.0l4.3 7.8h-8.6z"/><path d="M928.4 397.7l4.3 7.8h-8.6z"/><path d="M943.6 397.1l4.3 7.8h-8.6z"/><path d="M958.7 398.5l4.3 7.8h-8.6z"/><path d="M973.9 400.3l4.3 7.8h-8.6z"/><path d="M989.0 398.2l4.3 7.8h-8.6z"/><path d="M1004.2 396.9l4.3 7.8h-8.6z"/><path d="M1019.3 397.7l4.3 7.8h-8.6z"/><path d="M1034.5 399.3l4.3 7.8h-8.6z"/><path d="M1049.6 398.2l4.3 7.8h-8.6z"/></g>
</g>
<path d="M143.20000000000002 187.15H1053.8" stroke="#bfbfbf" stroke-width="1.700" fill="none"/>
<path d="M144.05 187.15V826.8" stroke="#bfbfbf" stroke-width="1.700" fill="none"/>
<path d="M143.20000000000002 826.0H1053.8" stroke="#bfbfbf" stroke-width="1.600" fill="none"/>
<path d="M1052.95 187.15V826.8" stroke="#bfbfbf" stroke-width="1.600" fill="none"/>
<g font-family="'Liberation Sans',Arial,sans-serif" font-size="12" fill="#000"><text x="140.3" y="830.3" text-anchor="end">-0.6</text><text x="140.3" y="802.7" text-anchor="end">-0.5</text><text x="140.3" y="776.1" text-anchor="end">-0.4</text><text x="140.3" y="749.4" text-anchor="end">-0.3</text><text x="140.3" y="722.8" text-anchor="end">-0.2</text><text x="140.3" y="696.2" text-anchor="end">-0.1</text><text x="140.3" y="669.6" text-anchor="end">0.0</text><text x="140.3" y="643.0" text-anchor="end">0.1</text><text x="140.3" y="616.4" text-anchor="end">0.2</text><text x="140.3" y="589.7" text-anchor="end">0.3</text><text x="140.3" y="563.1" text-anchor="end">0.4</text><text x="140.3" y="536.5" text-anchor="end">0.5</text><text x="140.3" y="509.9" text-anchor="end">0.6</text><text x="140.3" y="483.3" text-anchor="end">0.7</text><text x="140.3" y="456.6" text-anchor="end">0.8</text><text x="140.3" y="430.0" text-anchor="end">0.9</text><text x="140.3" y="403.4" text-anchor="end">1.0</text><text x="140.3" y="376.8" text-anchor="end">1.1</text><text x="140.3" y="350.2" text-anchor="end">1.2</text><text x="140.3" y="323.5" text-anchor="end">1.3</text><text x="140.3" y="296.9" text-anchor="end">1.4</text><text x="140.3" y="270.3" text-anchor="end">1.5</text><text x="140.3" y="243.7" text-anchor="end">1.6</text><text x="140.3" y="217.1" text-anchor="end">1.7</text><text x="140.3" y="190.4" text-anchor="end">1.8</text>
<text x="146.800" y="181.700">[g]</text>
<text transform="translate(145.5 835.4) rotate(-45)" text-anchor="end" font-size="12.15">2018/01/10 12:29:00</text>
<text transform="translate(221.2 835.4) rotate(-45)" text-anchor="end" font-size="12.15">2018/01/10 12:29:05</text>
<text transform="translate(296.9 835.4) rotate(-45)" text-anchor="end" font-size="12.15">2018/01/10 12:29:10</text>
<text transform="translate(372.7 835.4) rotate(-45)" text-anchor="end" font-size="12.15">2018/01/10 12:29:15</text>
<text transform="translate(448.4 835.4) rotate(-45)" text-anchor="end" font-size="12.15">2018/01/10 12:29:20</text>
<text transform="translate(524.2 835.4) rotate(-45)" text-anchor="end" font-size="12.15">2018/01/10 12:29:25</text>
<text transform="translate(599.9 835.4) rotate(-45)" text-anchor="end" font-size="12.15">2018/01/10 12:29:30</text>
<text transform="translate(675.6 835.4) rotate(-45)" text-anchor="end" font-size="12.15">2018/01/10 12:29:35</text>
<text transform="translate(751.4 835.4) rotate(-45)" text-anchor="end" font-size="12.15">2018/01/10 12:29:40</text>
<text transform="translate(827.1 835.4) rotate(-45)" text-anchor="end" font-size="12.15">2018/01/10 12:29:45</text>
<text transform="translate(902.9 835.4) rotate(-45)" text-anchor="end" font-size="12.15">2018/01/10 12:29:50</text>
<text transform="translate(978.6 835.4) rotate(-45)" text-anchor="end" font-size="12.15">2018/01/10 12:29:55</text>
<text transform="translate(1054.4 835.4) rotate(-45)" text-anchor="end" font-size="12.15">2018/01/10 12:30:00</text>
</g>
</svg>
<div class="abs" id="frameLine"></div>
<div class="abs" id="frameOuter"></div>
</div>
</body>
</html>
